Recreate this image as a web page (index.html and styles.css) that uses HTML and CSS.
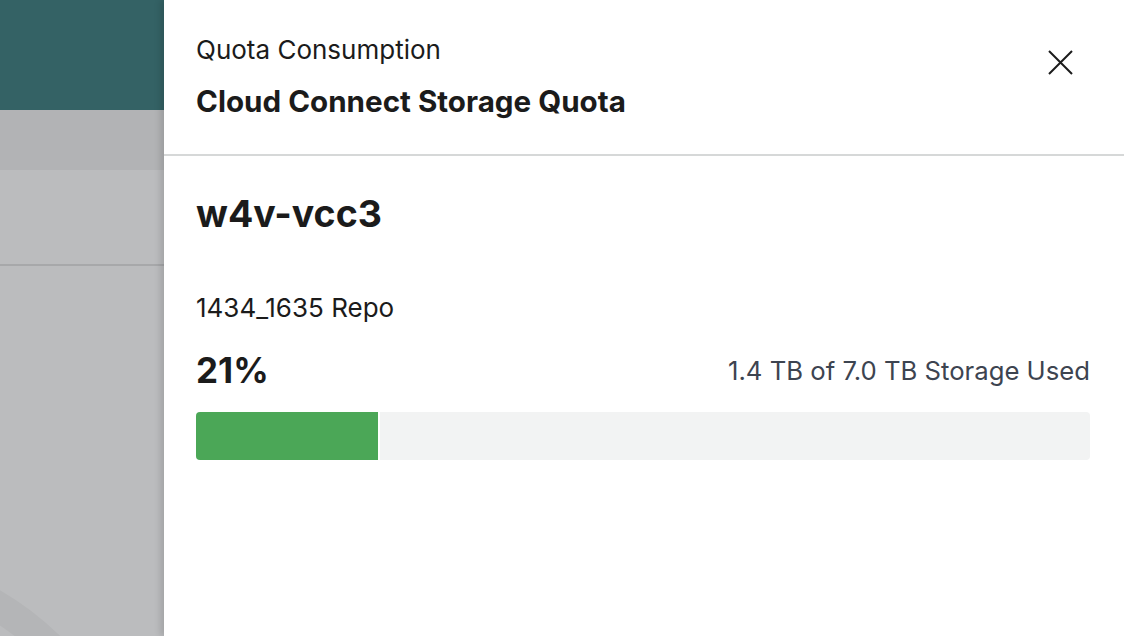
FILE: index.html
```html
<!DOCTYPE html>
<html lang="en">
<head>
  <meta charset="UTF-8">
  <title>Quota Consumption</title>
  <link rel="stylesheet" href="styles.css">
</head>
<body>

<div class="page">
  <div class="backdrop">
    <div class="bg-header"></div>
    <div class="bg-toolbar"></div>
    <div class="bg-row"></div>
    <div class="bg-arc"></div>
  </div>

  <div class="drawer">
    <div class="drawer-header">
      <div class="titles">
        <div class="subtitle">Quota Consumption</div>
        <h2 class="title">Cloud Connect Storage Quota</h2>
      </div>
      <button class="close-btn" aria-label="Close">
        <svg width="26" height="26" viewBox="0 0 26 26">
          <path d="M2 1 L25 24 M25 1 L2 24" stroke="#1b1b1b" stroke-width="2" fill="none"/>
        </svg>
      </button>
    </div>

    <div class="drawer-body">
      <h3 class="tenant">w4v-vcc3</h3>
      <div class="repo">1434_1635 Repo</div>
      <div class="usage-row">
        <span class="percent">21%</span>
        <span class="usage-text">1.4 TB of 7.0 TB Storage Used</span>
      </div>
      <div class="quota-bar">
        <div class="quota-fill" style="width: 20.6%"></div>
      </div>
    </div>
  </div>
</div>

</body>
</html>
```

FILE: styles.css
```css
* {
  box-sizing: border-box;
}

body {
  margin: 0;
  font-family: Inter, "Noto Sans", Arial, sans-serif;
  color: #1b1b1b;
  overflow: hidden;
}

.page {
  display: flex;
  height: 636px;
}

.backdrop {
  width: 164px;
  flex-shrink: 0;
  background: #bbbcbe;
  position: relative;
  overflow: hidden;
}

.bg-header {
  height: 110px;
  background: #346265;
}

.bg-toolbar {
  height: 60px;
  background: #b2b3b5;
}

.bg-row {
  height: 96px;
  border-bottom: 2px solid #a7a8aa;
}

.bg-arc {
  position: absolute;
  left: -450px;
  top: 550px;
  width: 600px;
  height: 600px;
  border-radius: 50%;
  border: 30px solid #b4b5b7;
}

.drawer {
  flex: 1;
  background: #fff;
  box-shadow: -4px 0 6px rgba(0, 0, 0, 0.12);
  position: relative;
}

.drawer-header {
  display: flex;
  justify-content: space-between;
  align-items: flex-start;
  padding: 33px 51px 0 32px;
  height: 156px;
  border-bottom: 2px solid #d6d8d8;
}

.subtitle {
  font-size: 26px;
  line-height: 34px;
}

.title {
  margin: 16px 0 0;
  font-size: 29.6px;
  font-weight: 700;
  line-height: 36px;
}

.close-btn {
  margin-top: 17px;
  padding: 0;
  border: none;
  background: none;
  cursor: pointer;
  width: 26px;
  height: 26px;
}

.drawer-body {
  padding: 0 34px 0 32px;
}

.tenant {
  margin: 35px 0 0;
  font-size: 37.5px;
  font-weight: 700;
  line-height: 46px;
}

.repo {
  margin-top: 56px;
  font-size: 26px;
  line-height: 30px;
}

.usage-row {
  display: flex;
  justify-content: space-between;
  align-items: center;
  margin-top: 25px;
  height: 44px;
}

.percent {
  font-size: 35px;
  font-weight: 700;
  line-height: 44px;
}

.usage-text {
  font-size: 25.7px;
  color: #3d4450;
}

.quota-bar {
  margin-top: 20px;
  height: 48px;
  background: #f2f3f3;
  border-radius: 4px;
  overflow: hidden;
}

.quota-fill {
  height: 100%;
  background: #4ba757;
  border-right: 2px solid #fff;
}
```
